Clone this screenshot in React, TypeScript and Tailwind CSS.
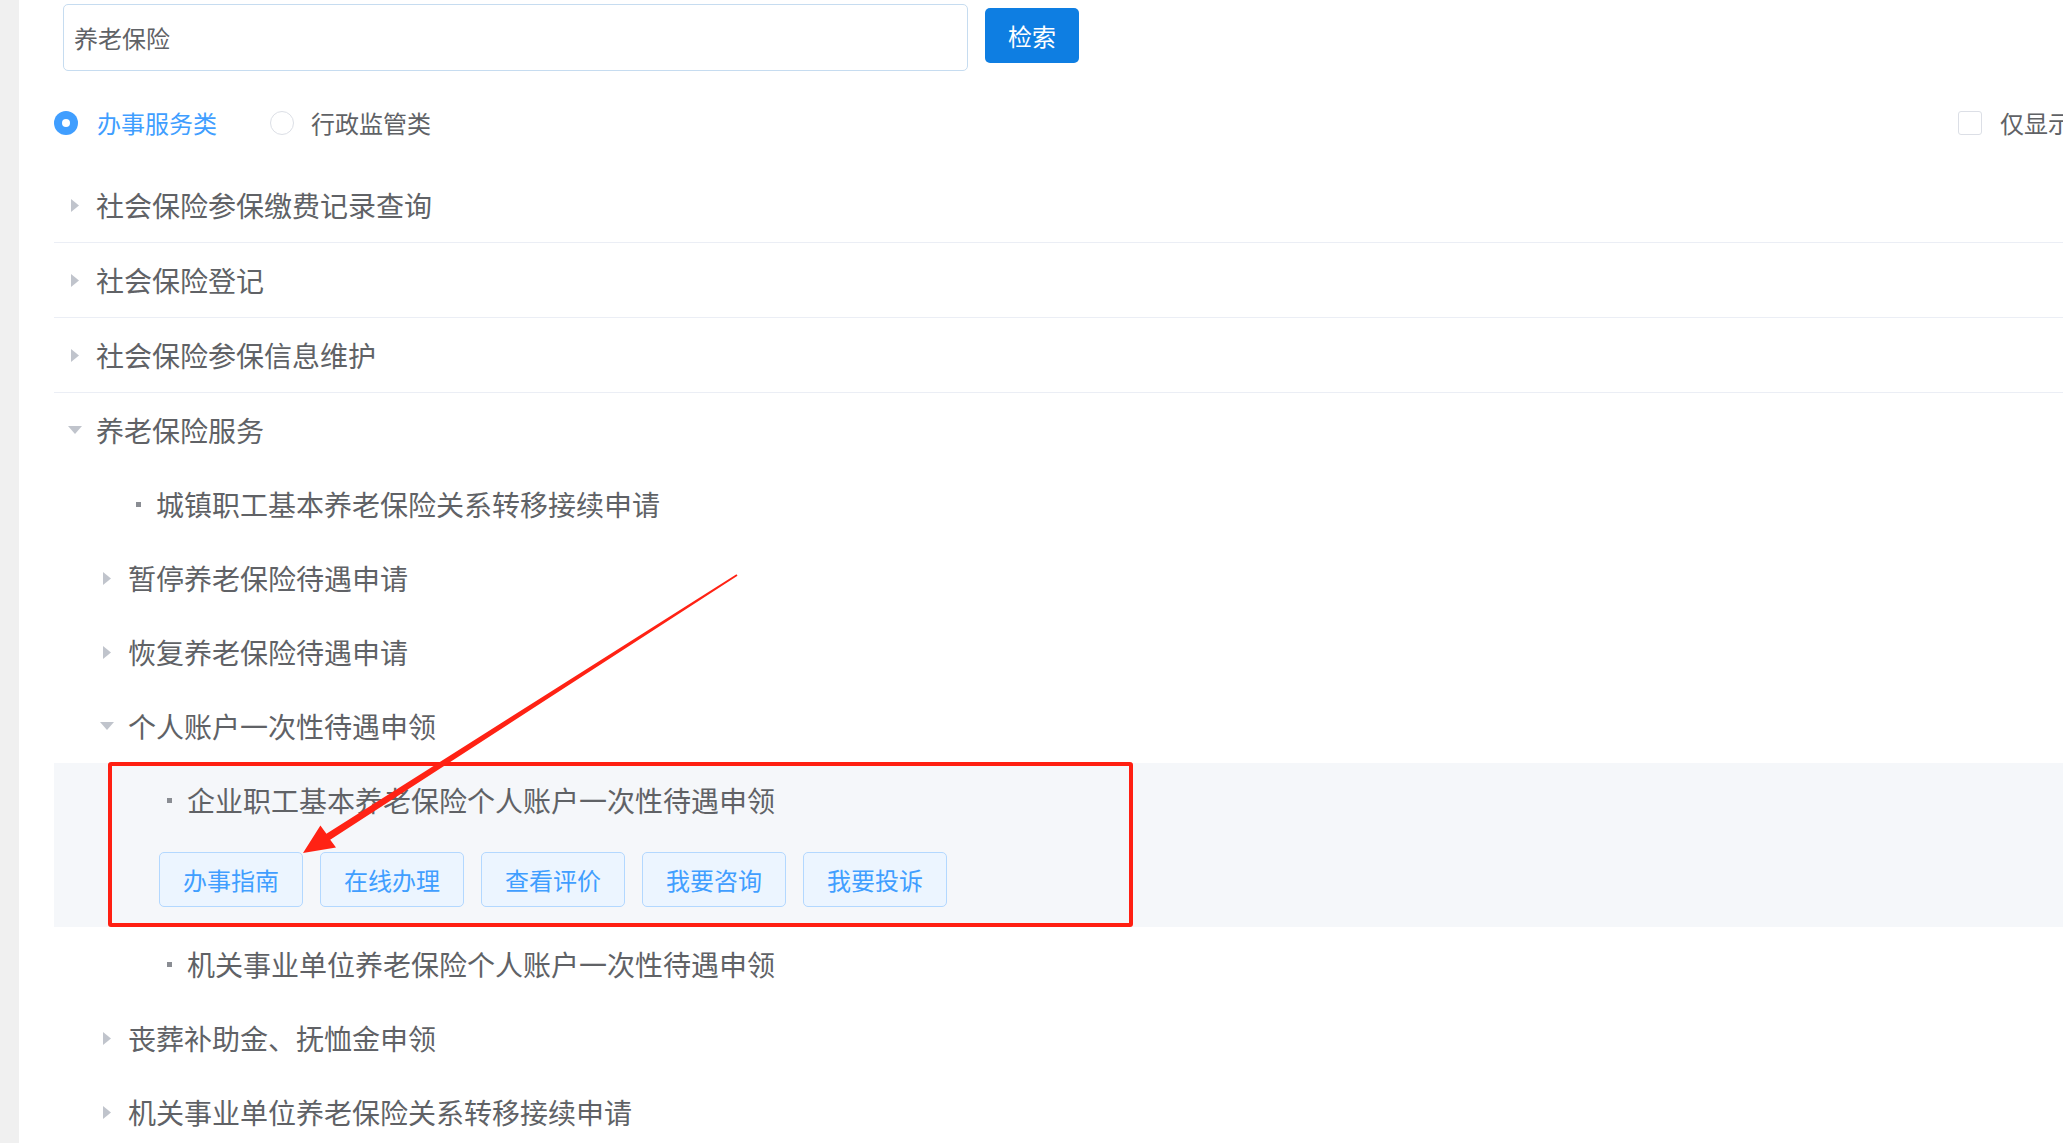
import React from 'react';

type Row = {
  label: string;
  kind: 'closed' | 'open' | 'leaf';
  level: 1 | 2 | 3;
  divider?: boolean;
};

const before: Row[] = [
  { label: '社会保险参保缴费记录查询', kind: 'closed', level: 1, divider: true },
  { label: '社会保险登记', kind: 'closed', level: 1, divider: true },
  { label: '社会保险参保信息维护', kind: 'closed', level: 1, divider: true },
  { label: '养老保险服务', kind: 'open', level: 1 },
  { label: '城镇职工基本养老保险关系转移接续申请', kind: 'leaf', level: 2 },
  { label: '暂停养老保险待遇申请', kind: 'closed', level: 2 },
  { label: '恢复养老保险待遇申请', kind: 'closed', level: 2 },
  { label: '个人账户一次性待遇申领', kind: 'open', level: 2 },
];

const after: Row[] = [
  { label: '机关事业单位养老保险个人账户一次性待遇申领', kind: 'leaf', level: 3 },
  { label: '丧葬补助金、抚恤金申领', kind: 'closed', level: 2 },
  { label: '机关事业单位养老保险关系转移接续申请', kind: 'closed', level: 2 },
];

const actions = ['办事指南', '在线办理', '查看评价', '我要咨询', '我要投诉'];

function Caret({ open }: { open: boolean }) {
  return (
    <span className="w-[22px] h-[22px] flex items-center justify-center shrink-0">
      {open ? (
        <svg width="14" height="8" viewBox="0 0 14 8">
          <path d="M0 0 L14 0 L7 8 Z" fill="#c0c4cc" />
        </svg>
      ) : (
        <svg width="8" height="13" viewBox="0 0 8 13">
          <path d="M0 0 L8 6.5 L0 13 Z" fill="#c0c4cc" />
        </svg>
      )}
    </span>
  );
}

function Bullet() {
  return <span className="w-[5px] h-[5px] bg-[#8a8d93] shrink-0" />;
}

function TreeRow({ row }: { row: Row }) {
  const pad = row.level === 1 ? 'pl-[10px]' : 'pl-[42px]';
  return (
    <div
      className={`flex items-center h-[74px] text-[28px] text-[#606266] ${
        row.divider ? 'border-b border-[#ebeef5] h-[75px]' : ''
      }`}
    >
      {row.kind === 'leaf' ? (
        <div className={`flex items-center ${row.level === 2 ? 'pl-[82px]' : 'pl-[113px]'}`}>
          <Bullet />
          <span className="ml-[15px] whitespace-nowrap">{row.label}</span>
        </div>
      ) : (
        <div className={`flex items-center ${pad}`}>
          <Caret open={row.kind === 'open'} />
          <span className="ml-[10px] whitespace-nowrap">{row.label}</span>
        </div>
      )}
    </div>
  );
}

export default function App() {
  return (
    <div
      className="relative flex w-[2063px] h-[1143px] overflow-hidden bg-white"
      style={{ fontFamily: '"Noto Sans CJK SC", "Noto Sans", sans-serif' }}
    >
      {/* left gutter */}
      <div className="w-[19px] shrink-0 bg-[#f0f0f0]" />

      <div className="flex-1 min-w-0">
        {/* search */}
        <div className="flex items-start pl-[44px] pt-[4px]">
          <div className="w-[905px] h-[67px] shrink-0 border border-[#c6dcf0] rounded-[5px] flex items-center pl-[10px] text-[24px] text-[#606266]">
            养老保险
          </div>
          <button className="ml-[17px] mt-[4px] w-[94px] h-[55px] shrink-0 rounded-[5px] bg-[#0e7ee2] text-white text-[24px] flex items-center justify-center">
            检索
          </button>
        </div>

        {/* category radios */}
        <div className="flex items-center h-[38px] mt-[33px] pl-[35px] text-[24px] whitespace-nowrap">
          <span className="w-[24px] h-[24px] rounded-full bg-[#409eff] flex items-center justify-center shrink-0">
            <span className="w-[8px] h-[8px] rounded-full bg-white" />
          </span>
          <span className="ml-[19px] text-[#409eff]">办事服务类</span>
          <span className="ml-[53px] w-[24px] h-[24px] rounded-full border border-[#dcdfe6] bg-white shrink-0" />
          <span className="ml-[17px] text-[#606266]">行政监管类</span>
          <span className="ml-[1527px] w-[24px] h-[24px] rounded-[3px] border border-[#dcdfe6] bg-white shrink-0" />
          <span className="ml-[18px] text-[#606266]">仅显示可在线办理事项</span>
        </div>

        {/* tree */}
        <div className="mt-[26px] ml-[35px]">
          {before.map((r) => (
            <TreeRow key={r.label} row={r} />
          ))}

          {/* selected node */}
          <div className="relative bg-[#f5f7fa] pb-[20px]">
            <div className="flex items-center h-[74px] pl-[113px] text-[28px] text-[#606266]">
              <Bullet />
              <span className="ml-[15px] whitespace-nowrap">企业职工基本养老保险个人账户一次性待遇申领</span>
            </div>
            <div className="flex gap-[17px] mt-[15px] pl-[105px]">
              {actions.map((a) => (
                <button
                  key={a}
                  className="w-[144px] h-[55px] rounded-[5px] border border-[#b3d8ff] bg-[#ecf5ff] text-[#409eff] text-[24px] flex items-center justify-center"
                >
                  {a}
                </button>
              ))}
            </div>
            {/* annotation box */}
            <div className="absolute left-[54px] top-[-1px] w-[1025px] h-[165px] border-[4px] border-[#ff1f12] rounded-[3px] pointer-events-none" />
          </div>

          {after.map((r) => (
            <TreeRow key={r.label} row={r} />
          ))}
        </div>
      </div>

      {/* annotation arrow */}
      <svg
        className="absolute left-0 top-0 pointer-events-none"
        width="2063"
        height="1143"
        viewBox="0 0 2063 1143"
      >
        <polygon
          points="737.5,575.8 736.5,574.2 326.4,833.8 320.4,825.5 303,853 336,847.5 330.2,839.8"
          fill="#ff2214"
        />
      </svg>
    </div>
  );
}
